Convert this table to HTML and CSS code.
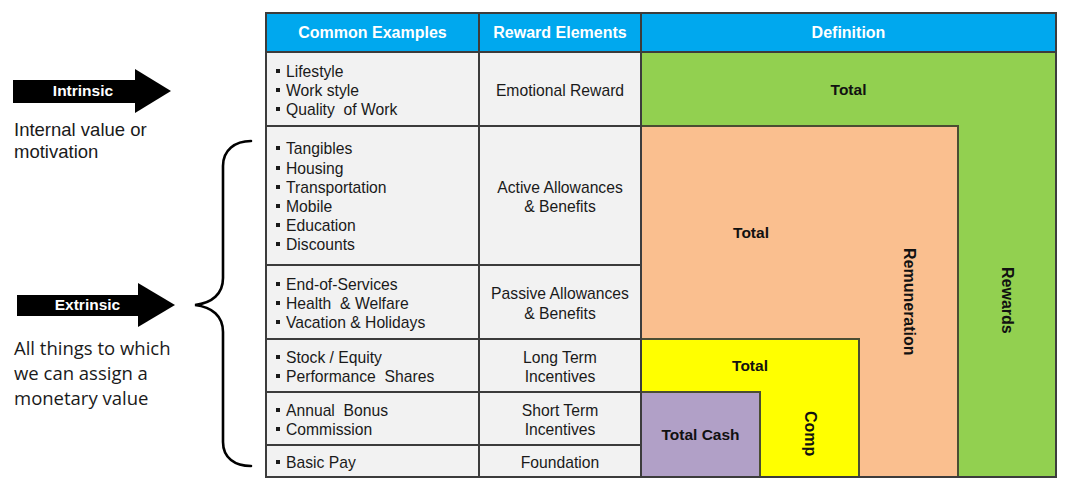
FILE: index.html
```html
<!DOCTYPE html>
<html lang="en">
<head>
<meta charset="utf-8">
<title>Total Rewards</title>
<link rel="stylesheet" href="styles.css">
</head>
<body>
<div class="page">
  <aside class="side">
    <div class="labels">
      <div class="arrow arrow-in">
        <span class="arrow-body">Intrinsic</span>
        <svg class="arrow-head" viewBox="0 0 36 44" preserveAspectRatio="none"><polygon points="0,0 36,22 0,44"/></svg>
      </div>
      <p class="note note-in">Internal value or<br>motivation</p>
      <div class="arrow arrow-ex">
        <span class="arrow-body">Extrinsic</span>
        <svg class="arrow-head" viewBox="0 0 37 44" preserveAspectRatio="none"><polygon points="0,0 37,22 0,44"/></svg>
      </div>
      <p class="note note-ex">All things to which<br>we can assign a<br>monetary value</p>
    </div>
    <svg class="brace" viewBox="0 0 62 332">
      <path d="M58,3 C42,3 30,12 30,28 L30,140 C30,156 19,165 2,167 C19,169 30,178 30,194 L30,304 C30,320 42,328 58,328"/>
    </svg>
  </aside>

  <div class="table">
    <div class="th">Common Examples</div>
    <div class="th">Reward Elements</div>
    <div class="th">Definition</div>

    <div class="cell ex"><ul><li>Lifestyle</li><li>Work style</li><li>Quality &nbsp;of Work</li></ul></div>
    <div class="cell re">Emotional Reward</div>

    <div class="def">
      <div class="lbl lbl-green">Total</div>
      <div class="row">
        <div class="box-orange">
          <div class="orange-main">
            <div class="lbl lbl-orange">Total</div>
            <div class="box-yellow">
              <div class="lbl lbl-yellow">Total</div>
              <div class="row">
                <div class="box-purple"><span class="lbl">Total Cash</span></div>
                <div class="strip"><span class="vtext">Comp</span></div>
              </div>
            </div>
          </div>
          <div class="strip"><span class="vtext">Remuneration</span></div>
        </div>
        <div class="strip"><span class="vtext">Rewards</span></div>
      </div>
    </div>

    <div class="cell ex"><ul><li>Tangibles</li><li>Housing</li><li>Transportation</li><li>Mobile</li><li>Education</li><li>Discounts</li></ul></div>
    <div class="cell re">Active Allowances<br>&amp; Benefits</div>

    <div class="cell ex"><ul><li>End-of-Services</li><li>Health &nbsp;&amp; Welfare</li><li>Vacation &amp; Holidays</li></ul></div>
    <div class="cell re">Passive Allowances<br>&amp; Benefits</div>

    <div class="cell ex"><ul><li>Stock / Equity</li><li>Performance &nbsp;Shares</li></ul></div>
    <div class="cell re">Long Term<br>Incentives</div>

    <div class="cell ex"><ul><li>Annual &nbsp;Bonus</li><li>Commission</li></ul></div>
    <div class="cell re">Short Term<br>Incentives</div>

    <div class="cell ex"><ul><li>Basic Pay</li></ul></div>
    <div class="cell re">Foundation</div>
  </div>
</div>
</body>
</html>
```

FILE: styles.css
```css
* { box-sizing: border-box; }

html, body {
  margin: 0;
  background: #ffffff;
}

body {
  font-family: "Liberation Sans", Arial, sans-serif;
  color: #151515;
}

.page {
  display: flex;
  padding-top: 12px;
}

/* ---------- left side ---------- */
.side {
  width: 265px;
  flex: none;
  display: flex;
}

.labels {
  width: 193px;
  flex: none;
  padding-top: 57px;
}

.arrow {
  display: flex;
  align-items: center;
  height: 44px;
}

.arrow-body {
  background: #000;
  color: #fff;
  font-weight: bold;
  font-size: 15.5px;
  display: flex;
  align-items: center;
  justify-content: center;
  padding-left: 18px;
}

.arrow-head {
  display: block;
  height: 44px;
  fill: #000;
}

.arrow-in { margin-left: 13px; }
.arrow-in .arrow-body { width: 122px; height: 23px; }
.arrow-in .arrow-head { width: 36px; }

.arrow-ex { margin-left: 17px; margin-top: 120px; }
.arrow-ex .arrow-body { width: 121px; height: 21px; padding-left: 20px; }
.arrow-ex .arrow-head { width: 37px; }

.note {
  margin: 0;
  margin-left: 14px;
  color: #1a1a1a;
}

.note-in {
  margin-top: 6px;
  font-size: 18.5px;
  line-height: 22px;
}

.note-ex {
  margin-top: 8px;
  font-family: "Open Sans", "Noto Sans", sans-serif;
  font-size: 18.5px;
  line-height: 25px;
}

.brace {
  display: block;
  width: 62px;
  height: 332px;
  margin-top: 126px;
  flex: none;
}

.brace path {
  fill: none;
  stroke: #000;
  stroke-width: 2.6;
  stroke-linecap: round;
}

/* ---------- table ---------- */
.table {
  display: grid;
  grid-template-columns: 211px 160px 413px;
  grid-template-rows: 37px 72px 137px 72px 51px 51px 30px;
  gap: 2px;
  padding: 2px;
  background: #3c3c3c;
  width: 792px;
}

.th {
  background: #00a8ee;
  color: #fff;
  font-weight: bold;
  font-size: 16px;
  display: flex;
  align-items: center;
  justify-content: center;
  padding-top: 1px;
}

.cell {
  background: #f2f2f2;
  display: flex;
  align-items: center;
  font-size: 15.7px;
  line-height: 19.2px;
  color: #1a1a1a;
  padding-top: 3px;
}

.ex { padding-left: 9px; }

.ex ul {
  margin: 0;
  padding: 0;
  list-style: none;
}

.ex li::before {
  content: "";
  display: inline-block;
  width: 4px;
  height: 4px;
  background: #1a1a1a;
  margin-right: 6px;
  vertical-align: 4px;
}

.re {
  justify-content: center;
  text-align: center;
}

/* ---------- definition ---------- */
.def {
  grid-column: 3;
  grid-row: 2 / 8;
  background: #92d050;
  display: flex;
  flex-direction: column;
}

.lbl {
  font-weight: bold;
  font-size: 15.5px;
  color: #111;
  display: flex;
  align-items: center;
  justify-content: center;
}

.lbl-green { height: 72px; flex: none; padding-top: 2px; }
.lbl-orange { height: 211px; flex: none; }
.lbl-yellow { height: 51px; flex: none; }

.row {
  display: flex;
  flex: 1;
}

.box-orange {
  width: 317px;
  flex: none;
  background: #fabf8f;
  border-top: 2px solid #4a4d32;
  border-right: 2px solid #4a4d32;
  display: flex;
}

.orange-main {
  width: 218px;
  flex: none;
  display: flex;
  flex-direction: column;
}

.box-yellow {
  flex: 1;
  background: #ffff00;
  border-top: 2px solid #4a4d32;
  border-right: 2px solid #4a4d32;
  display: flex;
  flex-direction: column;
}

.box-purple {
  width: 119px;
  flex: none;
  background: #b1a0c7;
  border-top: 2px solid #4a4d32;
  border-right: 2px solid #4a4d32;
  display: flex;
  align-items: center;
  justify-content: center;
}

.strip {
  flex: 1;
  display: flex;
  align-items: center;
  justify-content: center;
}

.vtext {
  writing-mode: vertical-rl;
  font-weight: bold;
  font-size: 16px;
  color: #111;
}
```
